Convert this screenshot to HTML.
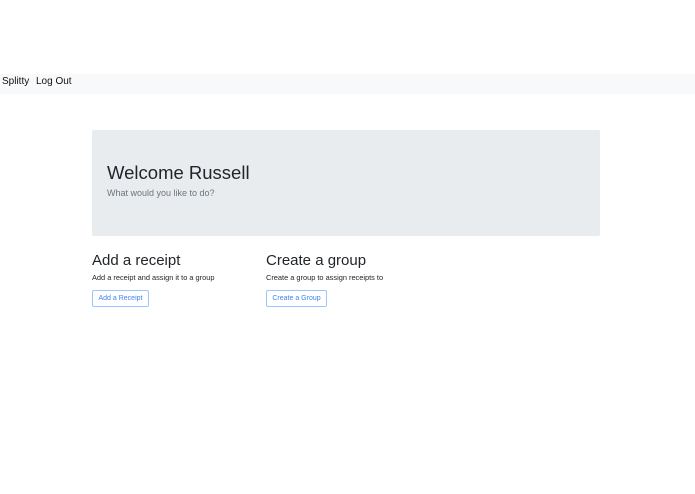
<!DOCTYPE html>
<html><head><meta charset="utf-8"><style>
body{margin:0;width:695px;height:494px;background:#fff;font-family:"Liberation Sans",sans-serif;color:#212529;position:relative;overflow:hidden}
.nav{position:absolute;left:0;top:74px;width:695px;height:20px;background:#f8f9fa}
.nav span{position:absolute;top:2px;font-size:10px;color:#111}
.jumbo{position:absolute;left:92px;top:130px;width:508px;height:106px;background:#e9ecef;border-radius:2px}
.jumbo h1{position:absolute;left:15px;top:32px;margin:0;font-size:18.5px;font-weight:normal;color:#212529}
.jumbo p{position:absolute;left:15px;top:58px;margin:0;font-size:9px;color:#6c757d}
h2{position:absolute;margin:0;font-size:15px;font-weight:normal;top:252px}
.d{position:absolute;top:273px;font-size:7.4px;color:#212529}
.b{position:absolute;top:290px;height:15px;border:1px solid #9ec5fe;border-radius:2px;color:#3d85f0;font-size:7px;line-height:15px;text-align:center;box-sizing:content-box}
</style></head><body>
<div class="nav"><span style="left:2px">Splitty</span><span style="left:36px">Log Out</span></div>
<div class="jumbo"><h1>Welcome Russell</h1><p>What would you like to do?</p></div>
<h2 style="left:92px">Add a receipt</h2>
<div class="d" style="left:92px">Add a receipt and assign it to a group</div>
<div class="b" style="left:92px;width:55px">Add a Receipt</div>
<h2 style="left:266px">Create a group</h2>
<div class="d" style="left:266px">Create a group to assign receipts to</div>
<div class="b" style="left:266px;width:59px">Create a Group</div>
</body></html>
